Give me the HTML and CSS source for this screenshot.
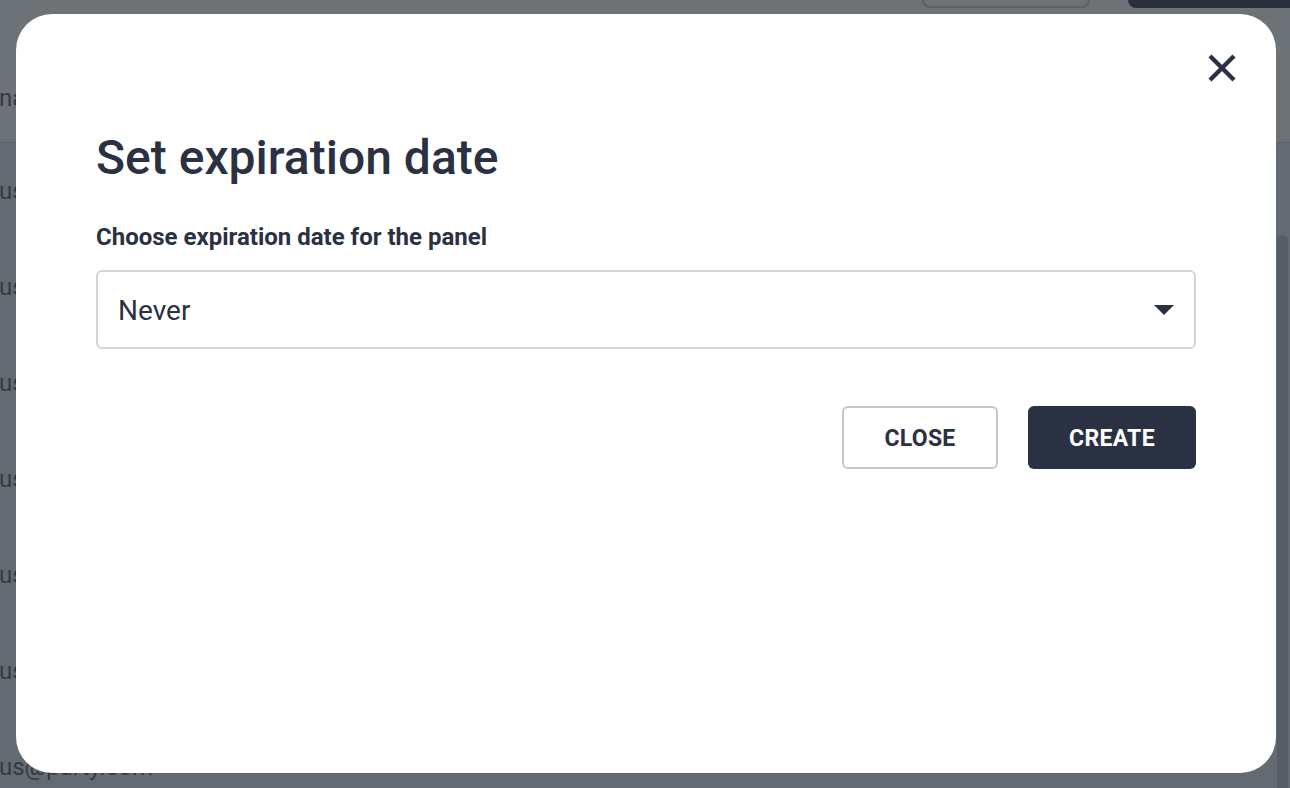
FILE: index.html
```html
<!DOCTYPE html>
<html>
<head>
    <title>Set expiration date</title>
    <link rel="stylesheet" href="styles.css">
</head>
<body>
    <div class="page">
        <header class="topbar">
            <div class="topbar-title">name</div>
            <div class="topbar-actions">
                <button class="top-btn top-btn-outline"></button>
                <button class="top-btn top-btn-dark"></button>
            </div>
        </header>
        <div class="page-body">
            <div class="rows">
                <div class="row">us</div>
                <div class="row">us</div>
                <div class="row">us</div>
                <div class="row">us</div>
                <div class="row">us</div>
                <div class="row">us</div>
                <div class="row">us@party.com</div>
            </div>
            <div class="scrollbar">
                <div class="scrollbar-thumb"></div>
            </div>
        </div>
    </div>

    <div class="backdrop">
        <div class="modal">
            <button class="modal-close" aria-label="Close">
                <svg width="28" height="28" viewBox="0 0 28 28"><path d="M2 2L26 26M26 2L2 26" stroke="#2a3142" stroke-width="4.4" fill="none"/></svg>
            </button>
            <h1 class="modal-title">Set expiration date</h1>
            <label class="field-label">Choose expiration date for the panel</label>
            <div class="select">
                <span class="select-value">Never</span>
                <svg class="select-arrow" width="20" height="10" viewBox="0 0 20 10"><polygon points="0,0 20,0 10,10" fill="#2a3142"/></svg>
            </div>
            <div class="modal-actions">
                <button class="btn btn-outline">CLOSE</button>
                <button class="btn btn-primary">CREATE</button>
            </div>
        </div>
    </div>
</body>
</html>
```

FILE: styles.css
```css
html, body {
    margin: 0;
    padding: 0;
    height: 100%;
    overflow: hidden;
}
body {
    font-family: Roboto, "Liberation Sans", sans-serif;
    background: #646a72;
}

/* page behind the dialog, already dimmed */
.page {
    display: flex;
    flex-direction: column;
    height: 100%;
}
.topbar {
    flex-shrink: 0;
    display: flex;
    justify-content: space-between;
    height: 142px;
    background: #6c7276;
    border-bottom: 1px solid #5d6369;
}
.topbar-title {
    font-size: 24px;
    color: #33393f;
    margin-left: -1px;
    padding-top: 84px;
}
.topbar-actions {
    display: flex;
    gap: 38px;
    margin-top: -40px;
}
.top-btn {
    height: 48px;
    border-radius: 8px;
    padding: 0;
}
.top-btn-outline {
    width: 168px;
    border: 2px solid #5c6268;
    background: transparent;
}
.top-btn-dark {
    width: 162px;
    border: none;
    background: #2a303c;
    border-radius: 8px 0 0 8px;
}
.page-body {
    flex: 1;
    min-height: 0;
    overflow: hidden;
    display: flex;
}
.rows {
    flex: 1;
    display: flex;
    flex-direction: column;
}
.row {
    height: 96px;
    flex-shrink: 0;
    display: flex;
    align-items: center;
    font-size: 24px;
    color: #353b42;
    margin-left: -1px;
}
.scrollbar {
    width: 12px;
    padding-top: 92px;
    padding-right: 1px;
}
.scrollbar-thumb {
    width: 11px;
    height: 600px;
    border-radius: 6px;
    background: #575d65;
}

/* dialog */
.backdrop {
    position: fixed;
    inset: 0;
    padding: 14px 14px 15px 16px;
    display: flex;
}
.modal {
    position: relative;
    flex: 1;
    background: #fff;
    border-radius: 36px;
    padding: 116px 80px 0;
    color: #2a3142;
}
.modal-close {
    position: absolute;
    top: 40px;
    right: 40px;
    padding: 0;
    border: none;
    background: none;
    width: 28px;
    height: 28px;
}
.modal-close svg {
    display: block;
}
.modal-title {
    margin: 0;
    font-size: 48px;
    line-height: 56px;
    font-weight: 500;
}
.field-label {
    display: block;
    margin-top: 37px;
    font-size: 24px;
    line-height: 28px;
    font-weight: 700;
}
.select {
    margin-top: 19px;
    height: 73px;
    border: 2px solid #d4d5d9;
    border-radius: 6px;
    display: flex;
    align-items: center;
    justify-content: space-between;
    padding: 2px 20px 0 20px;
}
.select-value {
    font-size: 28px;
}
.select-arrow {
    display: block;
    margin-top: -2px;
}
.modal-actions {
    display: flex;
    justify-content: flex-end;
    gap: 30px;
    margin-top: 57px;
}
.btn {
    height: 63px;
    border-radius: 6px;
    font-family: Roboto, "Liberation Sans", sans-serif;
    font-size: 23px;
    font-weight: 700;
    letter-spacing: 0.3px;
    color: #2a3142;
    padding-top: 2px;
}
.btn-outline {
    width: 156px;
    background: #fff;
    border: 2px solid #c6c7cb;
}
.btn-primary {
    width: 168px;
    background: #2a3142;
    border: none;
    color: #fff;
}
```
